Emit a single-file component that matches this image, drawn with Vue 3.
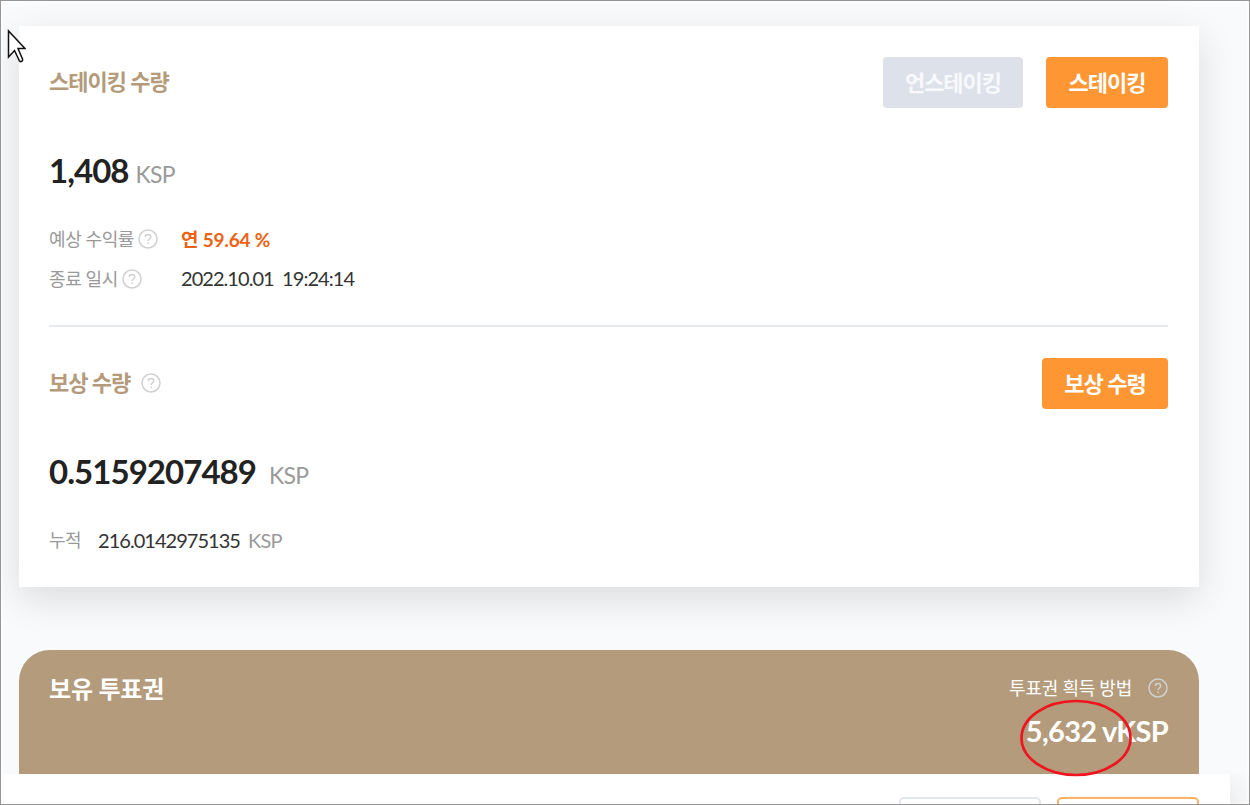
<template>
  <div class="screen">
    <main class="page">
      <section class="card">
        <div class="card-head">
          <h2 class="title">스테이킹 수량</h2>
          <div class="buttons">
            <button class="btn btn-disabled" disabled>언스테이킹</button>
            <button class="btn btn-stake">스테이킹</button>
          </div>
        </div>
        <div class="amount">
          <span class="value">{{ staking.amount }}</span>
          <span class="unit">KSP</span>
        </div>
        <dl class="info">
          <div v-for="row in staking.rows" :key="row.label" class="info-row">
            <dt>
              <span>{{ row.label }}</span>
              <svg class="help" viewBox="0 0 20 20">
                <circle cx="10" cy="10" r="9" />
                <path d="M7.3 8.1C7.3 6.4 8.4 5.4 10 5.4s2.7 1 2.7 2.5c0 2.1-2.6 2.1-2.6 4.2M10.1 13.5v1.4" />
              </svg>
            </dt>
            <dd :class="row.type">{{ row.value }}</dd>
          </div>
        </dl>

        <div class="divider"></div>

        <div class="card-head">
          <h2 class="title title-reward">
            <span>보상 수량</span>
            <svg class="help" viewBox="0 0 20 20">
              <circle cx="10" cy="10" r="9" />
              <path d="M7.3 8.1C7.3 6.4 8.4 5.4 10 5.4s2.7 1 2.7 2.5c0 2.1-2.6 2.1-2.6 4.2M10.1 13.5v1.4" />
            </svg>
          </h2>
          <button class="btn btn-reward">보상 수령</button>
        </div>
        <div class="amount amount-reward">
          <span class="value">{{ reward.amount }}</span>
          <span class="unit">KSP</span>
        </div>
        <div class="total">
          <span class="total-label">누적</span>
          <span class="total-value">{{ reward.total }}</span>
          <span class="total-unit">KSP</span>
        </div>
      </section>

      <section class="vote">
        <h2 class="vote-title">보유 투표권</h2>
        <div class="vote-right">
          <div class="vote-guide">
            <span>투표권 획득 방법</span>
            <svg class="help" viewBox="0 0 20 20">
              <circle cx="10" cy="10" r="9" />
              <path d="M7.3 8.1C7.3 6.4 8.4 5.4 10 5.4s2.7 1 2.7 2.5c0 2.1-2.6 2.1-2.6 4.2M10.1 13.5v1.4" />
            </svg>
          </div>
          <div class="vote-amount">
            <span>{{ votes }} vKSP</span>
            <svg class="marker" viewBox="0 0 112 78">
              <ellipse cx="56" cy="39" rx="54.5" ry="37" />
            </svg>
          </div>
        </div>
      </section>
    </main>

    <div class="sheet">
      <span class="sheet-btn"></span>
      <span class="sheet-btn sheet-btn-primary"></span>
    </div>

    <svg class="cursor" viewBox="0 0 20 36">
      <path d="M2.500 3v26l6-6.500 5 10.500c1.500 1.500 3.500 0 3-2L12 20.500h7z" />
    </svg>
  </div>
</template>

<script setup>
const staking = {
  amount: '1,408',
  rows: [
    { label: '예상 수익률', value: '연 59.64 %', type: 'rate' },
    { label: '종료 일시', value: '2022.10.01  19:24:14', type: 'date' }
  ]
};

const reward = {
  amount: '0.5159207489',
  total: '216.0142975135'
};

const votes = '5,632';
</script>

<style>
body {
  margin: 0;
}
</style>

<style scoped>
.screen {
  position: relative;
  display: flex;
  flex-direction: column;
  box-sizing: border-box;
  width: 1250px;
  height: 805px;
  overflow: hidden;
  border: 1px solid #969696;
  background: #f9fafc;
  box-shadow: inset 0 0 0 2px #fdfdfe;
  font-family: Lato, "Noto Sans CJK KR", sans-serif;
  color: #222;
}

.page {
  position: relative;
  z-index: 1;
  flex: none;
  padding: 25px 50px 0 18px;
}

h2,
dl,
dd {
  margin: 0;
}

.card {
  box-sizing: border-box;
  height: 561px;
  padding: 31px 31px 0 30px;
  background: #fff;
  box-shadow: 0 12px 36px rgba(0, 0, 0, 0.12);
}

.card-head {
  display: flex;
  align-items: center;
  justify-content: space-between;
  height: 51px;
}

.title {
  display: flex;
  align-items: center;
  padding-bottom: 1px;
  font-size: 22px;
  font-weight: 700;
  line-height: 32px;
  letter-spacing: -1px;
  color: #b39b7b;
  white-space: nowrap;
}

.title-reward {
  gap: 11px;
}

.buttons {
  display: flex;
  gap: 23px;
}

.btn {
  height: 51px;
  padding: 0 0 4px;
  border: 0;
  border-radius: 4px;
  background: #ff9634;
  font-family: inherit;
  font-size: 22px;
  font-weight: 700;
  letter-spacing: -1px;
  color: #fff;
  white-space: nowrap;
}

.btn-disabled {
  width: 140px;
  background: #dde1ea;
  color: #f8f9fc;
}

.btn-stake {
  width: 122px;
}

.btn-reward {
  width: 126px;
}

.amount {
  display: flex;
  align-items: baseline;
  gap: 7px;
  height: 48px;
  margin-top: 38px;
  line-height: 48px;
}

.amount-reward {
  gap: 13px;
}

.value {
  font-size: 33px;
  font-weight: 700;
  letter-spacing: -0.95px;
}

.unit {
  font-size: 23px;
  letter-spacing: -0.7px;
  color: #999;
}

.info {
  margin-top: 25px;
}

.info-row {
  display: flex;
  align-items: center;
  height: 40px;
  font-size: 18px;
}

.info-row dt {
  display: flex;
  align-items: center;
  gap: 4px;
  width: 132px;
  letter-spacing: -0.4px;
  color: #999;
  white-space: nowrap;
}

.info-row dt span,
.info-row dd {
  padding-bottom: 2px;
}

.info-row dd {
  white-space: pre;
}

.rate {
  font-size: 19px;
  font-weight: 700;
  letter-spacing: -0.2px;
  color: #eb6313;
}

.date {
  font-size: 20px;
  letter-spacing: -0.95px;
  color: #333;
}

.help {
  flex: none;
  width: 20px;
  height: 20px;
  fill: none;
  stroke: #d0d0d0;
  stroke-width: 1.5;
}

.divider {
  height: 2px;
  margin: 26px 0 31px;
  background: #e6eaee;
}

.total {
  display: flex;
  align-items: center;
  height: 40px;
  margin-top: 25px;
  font-size: 20px;
  line-height: 28px;
}

.total-label {
  width: 49px;
  font-size: 18px;
  letter-spacing: -0.6px;
  color: #999;
}

.total-value {
  margin-right: 8px;
  letter-spacing: -0.97px;
  color: #333;
}

.total-unit {
  font-size: 20px;
  letter-spacing: -0.8px;
  color: #999;
}

.vote {
  display: flex;
  justify-content: space-between;
  box-sizing: border-box;
  height: 124px;
  margin-top: 63px;
  padding: 22px 31px 0 30px;
  border-radius: 31px 31px 0 0;
  background: #b39b7b;
  color: #fff;
}

.vote-title {
  height: 34px;
  font-size: 24px;
  font-weight: 700;
  line-height: 34px;
  letter-spacing: -0.2px;
}

.vote-right {
  display: flex;
  flex-direction: column;
  align-items: flex-end;
}

.vote-guide {
  display: flex;
  align-items: center;
  gap: 16px;
  height: 32px;
  font-size: 18px;
  letter-spacing: -0.25px;
}

.vote-guide span {
  padding-bottom: 2px;
}

.vote-amount {
  position: relative;
  margin-top: 8px;
  font-size: 29px;
  font-weight: 700;
  line-height: 38px;
  letter-spacing: -0.7px;
  white-space: nowrap;
}

.marker {
  position: absolute;
  right: 36px;
  top: -13px;
  width: 112px;
  height: 78px;
  fill: none;
  stroke: #f0141e;
  stroke-width: 2.7;
}

.sheet {
  display: flex;
  flex: none;
  justify-content: flex-end;
  gap: 16px;
  box-sizing: border-box;
  width: 1226px;
  height: 80px;
  margin-left: 3px;
  padding: 23px 31px 0;
  background: #fff;
  box-shadow: 0 12px 36px rgba(0, 0, 0, 0.12);
  clip-path: inset(0 -20px 0 0);
}

.sheet-btn {
  box-sizing: border-box;
  width: 142px;
  height: 51px;
  border: 2px solid #e3e7ee;
  border-radius: 5px;
}

.sheet-btn-primary {
  border-color: #ffb066;
}

.cursor {
  position: absolute;
  left: 5px;
  top: 27px;
  z-index: 2;
  width: 20px;
  height: 36px;
  fill: #fff;
  stroke: #111;
  stroke-width: 1.5;
}
</style>
